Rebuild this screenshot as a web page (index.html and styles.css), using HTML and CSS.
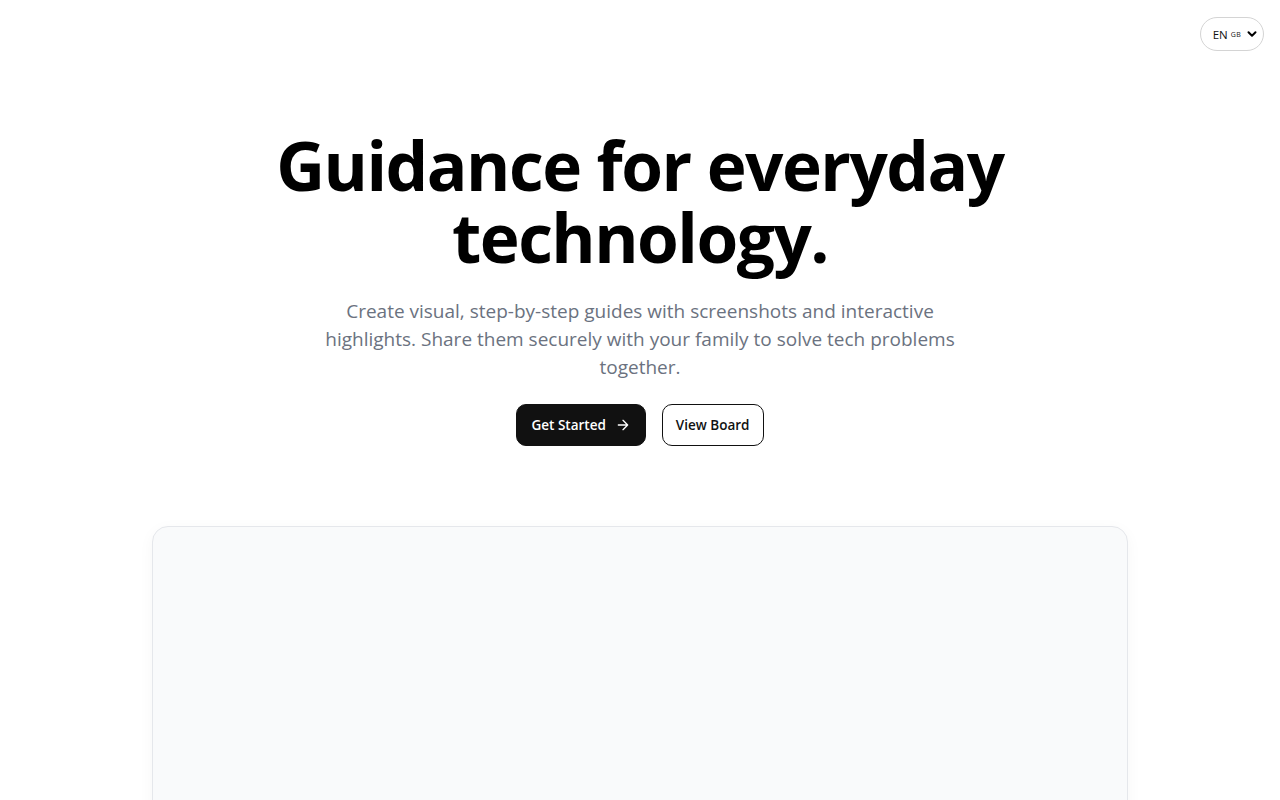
FILE: index.html
```html
<!DOCTYPE html>
<html lang="en">
<head>
<meta charset="utf-8">
<title>Guidance for everyday technology</title>
<link rel="stylesheet" href="styles.css">
</head>
<body>
<header class="topbar">
  <div class="lang-select">
    <span class="lang-code">EN</span><span class="lang-flag">GB</span>
    <svg class="chev" width="10" height="10" viewBox="0 0 10 10" aria-hidden="true"><path d="M1.5 3.2 L5 6.7 L8.5 3.2" fill="none" stroke="#000" stroke-width="2" stroke-linecap="round" stroke-linejoin="round"/></svg>
  </div>
</header>
<main class="hero">
  <h1 class="title">Guidance for everyday technology.</h1>
  <p class="lead">Create visual, step-by-step guides with screenshots and interactive highlights. Share them securely with your family to solve tech problems together.</p>
  <div class="actions">
    <a class="btn btn-primary" href="#">Get Started
      <svg width="16" height="16" viewBox="0 0 24 24" aria-hidden="true"><path d="M5 12h14M12 5l7 7-7 7" fill="none" stroke="currentColor" stroke-width="2" stroke-linecap="round" stroke-linejoin="round"/></svg>
    </a>
    <a class="btn btn-outline" href="#">View Board</a>
  </div>
  <div class="preview"></div>
</main>
</body>
</html>
```

FILE: styles.css
```css
* { box-sizing: border-box; }
html, body { margin: 0; padding: 0; background: #fff; }
body {
  font-family: "Open Sans", "Noto Sans", "Liberation Sans", sans-serif;
  color: #0a0a0a;
  overflow: hidden;
  height: 800px;
}
.topbar {
  display: flex;
  justify-content: flex-end;
  padding: 17px 16px 0 0;
  height: 0;
}
.lang-select {
  display: flex;
  align-items: center;
  height: 34px;
  padding: 0 6px 0 12px;
  border: 1px solid #d4d4d4;
  border-radius: 17px;
  background: #fff;
  font-size: 11.5px;
  color: #111;
}
.lang-flag { font-size: 7px; margin-left: 3px; margin-right: 6px; letter-spacing: 0.3px; }
.chev { display: block; }
.hero {
  display: flex;
  flex-direction: column;
  align-items: center;
  padding-top: 112px;
}
.title {
  margin: 0;
  max-width: 760px;
  text-align: center;
  font-size: 67.5px;
  line-height: 72px;
  font-weight: 700;
  letter-spacing: -1.5px;
  color: #000;
}
.lead {
  margin: 24px 0 0;
  max-width: 672px;
  text-align: center;
  font-size: 19px;
  line-height: 28px;
  color: #6b7280;
}
.actions {
  display: flex;
  gap: 16px;
  margin-top: 23px;
}
.btn {
  display: inline-flex;
  align-items: center;
  gap: 9px;
  height: 42px;
  padding: 0 14px;
  border-radius: 10px;
  font-size: 13.5px;
  font-weight: 600;
  text-decoration: none;
}
.btn-primary { background: #111; color: #fff; border: 1px solid #111; }
.btn-outline { background: #fff; color: #111; border: 1px solid #111; padding: 0 13px; }
.preview {
  margin-top: 80px;
  width: 976px;
  height: 520px;
  border: 1px solid #e5e7eb;
  border-radius: 16px;
  background: #f9fafb;
  box-shadow: 0 4px 16px rgba(0,0,0,0.04);
}
```
